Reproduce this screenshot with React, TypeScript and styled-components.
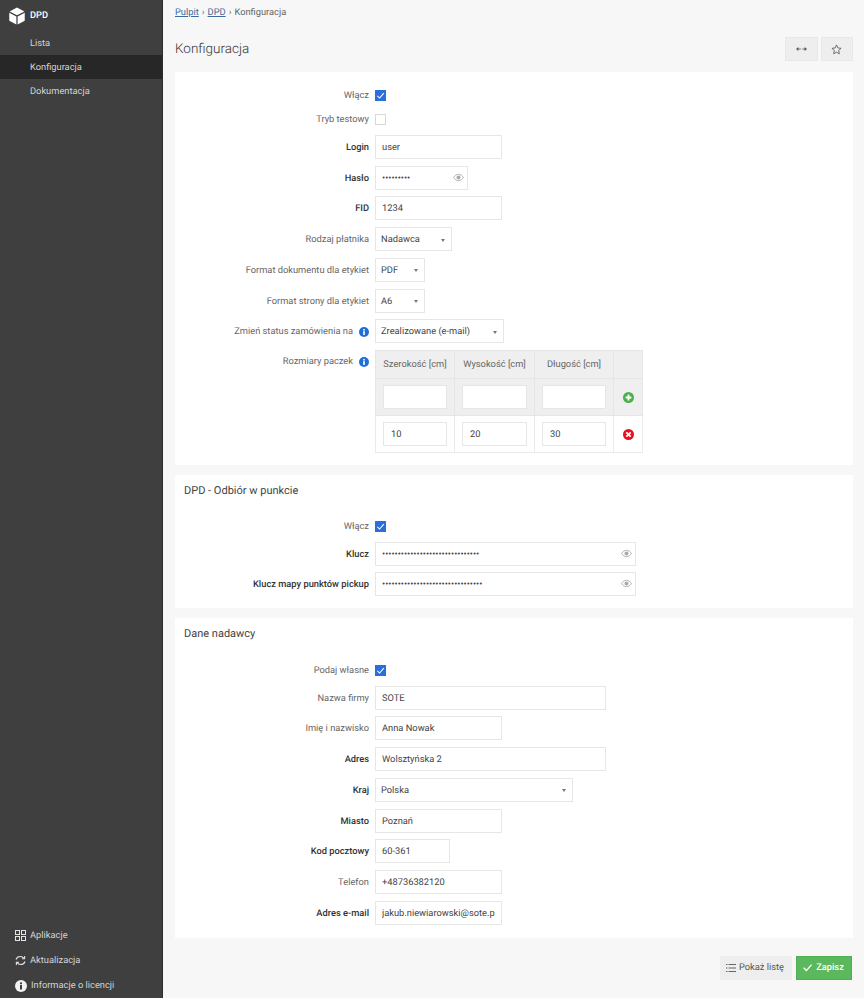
import React from 'react';
import styled, { createGlobalStyle } from 'styled-components';

const Global = createGlobalStyle`
  html, body { margin: 0; padding: 0; background: #f7f7f7; }
  body { font-family: Roboto, "Liberation Sans", sans-serif; font-size: 9.3px; color: #555; text-rendering: geometricPrecision; }
  input, button { text-rendering: geometricPrecision; }
  * { box-sizing: border-box; }
`;

const Shell = styled.div`display: flex; min-height: 998px;`;
const Sidebar = styled.aside`
  width: 163px; flex: none; background: #3f3f3f; border-right: 1px solid #2c2c2c;
  display: flex; flex-direction: column; color: #e2e2e2;
`;
const Brand = styled.div`
  height: 31px; padding: 0 0 0 9px; display: flex; align-items: center; gap: 5px;
  color: #fff; font-weight: 500;
`;
const NavList = styled.nav`display: flex; flex-direction: column;`;
const NavItem = styled.a<{ $active?: boolean }>`
  height: 24px; padding: 1px 0 0 30px; display: flex; align-items: center;
  background: ${p => (p.$active ? '#272727' : 'transparent')}; color: #d4d4d4;
`;
const SideFooter = styled.div`margin-top: auto; display: flex; flex-direction: column;`;
const FootItem = styled.a`
  height: 25.3px; padding: 1px 0 0 15px; display: flex; align-items: center; gap: 4px; color: #d4d4d4;
`;

const Main = styled.main`flex: 1; min-width: 0; padding: 0 11px 0 12px;`;
const Crumbs = styled.div`height: 24px; padding-top: 1px; display: flex; align-items: center; gap: 3px; color: #666;`;
const CrumbLink = styled.a`color: #3c6a9e; text-decoration: underline;`;
const TitleBar = styled.div`
  height: 48px; display: flex; align-items: center; justify-content: space-between; padding-top: 2px;
`;
const Title = styled.h1`margin: 0; font-size: 13.5px; font-weight: 300; color: #333;`;
const TitleActions = styled.div`display: flex; gap: 3px;`;
const IconButton = styled.button`
  width: 32.5px; height: 24px; padding: 0; background: #eee; border: 1px solid #e8e8e8;
  display: flex; align-items: center; justify-content: center; color: #555;
`;

const Card = styled.section<{ $bottom?: number }>`
  background: #fff; margin-bottom: 10px; padding-bottom: ${p => p.$bottom ?? 12}px;
`;
const CardHead = styled.h2`
  margin: 0; height: 29px; padding: 1px 0 0 9px; display: flex; align-items: center;
  font-size: 11px; font-weight: 400; color: #444;
`;
const Form = styled.div<{ $top: number }>`
  padding-top: ${p => p.$top}px; display: flex; flex-direction: column; gap: 6.75px;
`;
const Row = styled.div<{ $check?: boolean }>`
  display: grid; grid-template-columns: 194px 1fr; column-gap: 6px;
  align-items: ${p => (p.$check ? 'center' : 'start')};
  min-height: ${p => (p.$check ? '17.33px' : '24px')};
`;
const Label = styled.label<{ $bold?: boolean; $top?: boolean }>`
  display: flex; justify-content: flex-end; align-items: center; gap: 6px; padding-top: 1px;
  height: ${p => (p.$top ? '22px' : 'auto')}; min-height: ${p => (p.$top ? '22px' : '24px')};
  font-weight: ${p => (p.$bold ? 500 : 400)}; color: ${p => (p.$bold ? '#333' : '#666')};
  white-space: nowrap;
`;
const CheckLabel = styled(Label)`min-height: 0;`;
const Box = styled.span<{ $on?: boolean }>`
  width: 11px; height: 11px; display: flex; align-items: center; justify-content: center;
  background: ${p => (p.$on ? '#2a6fdb' : '#fff')};
  border: 1px solid ${p => (p.$on ? '#2a6fdb' : '#d8d8d8')};
`;
const FieldWrap = styled.div<{ $w: number }>`position: relative; width: ${p => p.$w}px; height: 24px;`;
const TextInput = styled.input`
  display: block; width: 100%; height: 100%; border: 1px solid #e6e6e6; background: #fff; outline: 0;
  padding: 1px 6px 0; font: 400 9.3px Roboto, sans-serif; color: #444;
`;
const EyeSlot = styled.span`position: absolute; right: 4px; top: 7px; color: #aaa; display: flex;`;
const SelectBox = styled.div<{ $w: number }>`
  width: ${p => p.$w}px; height: 24px; border: 1px solid #e6e6e6; background: #fff;
  display: flex; align-items: center; justify-content: space-between; padding: 1px 6px 0 5px; color: #444;
`;
const Caret = styled.span`
  width: 0; height: 0; border-left: 2px solid transparent; border-right: 2px solid transparent;
  border-top: 3px solid #777; margin-top: 1px;
`;
const Table = styled.table`
  border-collapse: collapse; width: 267px; table-layout: fixed; color: #555;
  th, td { border: 1px solid #eaeaea; padding: 0; text-align: center; }
`;
const Head = styled.tr`
  background: #efefef; height: 28px;
  th { font-weight: 400; color: #666; border-color: #e6e6e6; }
`;
const BodyRow = styled.tr<{ $shade?: boolean }>`
  height: 37px; background: ${p => (p.$shade ? '#efefef' : '#fff')};
  td { padding: 0 7px; }
  td:last-child { padding: 0; }
  ${p => p.$shade && 'td { border-color: #e6e6e6; }'}
`;
const CellInput = styled(TextInput)`height: 24px; padding: 1px 7px 0;`;
const ActionIcon = styled.span`display: flex; justify-content: center;`;
const Foot = styled.div`display: flex; justify-content: flex-end; gap: 4px; padding: 8px 1px 0 0;`;
const ListBtn = styled.button`
  width: 72px; height: 24px; background: #eee; border: 0; display: flex; align-items: center; justify-content: center;
  gap: 3px; font: 400 9.3px Roboto, sans-serif; color: #555; padding: 0 2px 0 0;
`;
const SaveBtn = styled.button`
  width: 56px; height: 24px; background: #5cb85c; border: 1px solid #52ae52; display: flex; align-items: center;
  justify-content: center; gap: 3px; font: 500 9.3px Roboto, sans-serif; color: #fff; padding: 0 2px 0 0;
`;

const Logo = () => (
  <svg width="16" height="18" viewBox="0 0 15 17">
    <path d="M7.5 .5 14.5 4.2 7.5 7.8 .5 4.2Z" fill="#fff" />
    <path d="M.2 5.4 6.9 8.9V16.6L.2 13Z" fill="#fff" />
    <path d="M14.8 5.4 8.1 8.9V16.6L14.8 13Z" fill="#fff" />
  </svg>
);
const Check = ({ c = '#fff', s = 9 }: { c?: string; s?: number }) => (
  <svg width={s} height={s} viewBox="0 0 10 10"><path d="M1.5 5.3 4 7.8 8.7 2.4" fill="none" stroke={c} strokeWidth="1.2" /></svg>
);
const Eye = () => (
  <svg width="11" height="9" viewBox="0 0 12 10">
    <path d="M.5 5C2 2.6 3.8 1.5 6 1.5S10 2.6 11.5 5C10 7.4 8.2 8.5 6 8.5S2 7.4.5 5Z" fill="none" stroke="#aaa" />
    <circle cx="6" cy="5" r="2.2" fill="#aaa" />
  </svg>
);
const Info = ({ bg = '#1f6fd6', fg = '#fff', s = 10 }: { bg?: string; fg?: string; s?: number }) => (
  <svg width={s} height={s} viewBox="0 0 12 12">
    <circle cx="6" cy="6" r="6" fill={bg} />
    <rect x="5" y="5" width="2" height="4.5" fill={fg} />
    <rect x="5" y="2.4" width="2" height="1.8" fill={fg} />
  </svg>
);
const Plus = () => (
  <svg width="11" height="11" viewBox="0 0 12 12">
    <circle cx="6" cy="6" r="6" fill="#4cae4c" />
    <path d="M6 2.8V9.2M2.8 6H9.2" stroke="#fff" strokeWidth="2" />
  </svg>
);
const Cross = () => (
  <svg width="11" height="11" viewBox="0 0 12 12">
    <circle cx="6" cy="6" r="6" fill="#e8101c" />
    <path d="M3.6 3.6 8.4 8.4M8.4 3.6 3.6 8.4" stroke="#fff" strokeWidth="2" />
  </svg>
);
const Grid = () => (
  <svg width="11" height="11" viewBox="0 0 11 11" fill="none" stroke="#e2e2e2">
    <rect x=".5" y=".5" width="4" height="4" /><rect x="6.5" y=".5" width="4" height="4" />
    <rect x=".5" y="6.5" width="4" height="4" /><rect x="6.5" y="6.5" width="4" height="4" />
  </svg>
);
const Sync = () => (
  <svg width="11" height="11" viewBox="0 0 11 11" fill="none" stroke="#e2e2e2" strokeWidth="1.1">
    <path d="M1 4.5C1.6 2.6 3.3 1.5 5.3 1.5c1.5 0 2.8.7 3.6 1.9" />
    <path d="M10 6.5C9.4 8.4 7.7 9.5 5.7 9.5c-1.5 0-2.8-.7-3.6-1.9" />
    <path d="M9.6 1V3.8H7M1.4 10V7.2H4" />
  </svg>
);
const Arrows = () => (
  <svg width="11" height="6" viewBox="0 0 11 6" fill="#555">
    <rect x="2" y="2.6" width="2.8" height=".8" /><rect x="6.2" y="2.6" width="2.8" height=".8" />
    <path d="M0 3 2.4 1V5ZM11 3 8.6 1V5Z" />
  </svg>
);
const Star = () => (
  <svg width="11" height="11" viewBox="0 0 12 12">
    <path d="M6 1 7.5 4.3 11 4.7 8.4 7.1 9.1 10.7 6 8.9 2.9 10.7 3.6 7.1 1 4.7 4.5 4.3Z" fill="none" stroke="#555" strokeWidth=".9" />
  </svg>
);
const ListIcon = () => (
  <svg width="10" height="8" viewBox="0 0 10 8" fill="#666">
    <rect y="0" width="1.5" height="1" /><rect x="2.5" y="0" width="7.5" height="1" />
    <rect y="3.5" width="1.5" height="1" /><rect x="2.5" y="3.5" width="7.5" height="1" />
    <rect y="7" width="1.5" height="1" /><rect x="2.5" y="7" width="7.5" height="1" />
  </svg>
);

const CheckRow = ({ label, on }: { label: string; on?: boolean }) => (
  <Row $check>
    <CheckLabel>{label}</CheckLabel>
    <Box $on={on}>{on && <Check />}</Box>
  </Row>
);
const InputRow = ({ label, value, w, bold }: { label: string; value: string; w: number; bold?: boolean }) => (
  <Row>
    <Label $bold={bold}>{label}</Label>
    <FieldWrap $w={w}><TextInput readOnly defaultValue={value} /></FieldWrap>
  </Row>
);
const PassRow = ({ label, value, w, bold }: { label: string; value: string; w: number; bold?: boolean }) => (
  <Row>
    <Label $bold={bold}>{label}</Label>
    <FieldWrap $w={w}>
      <TextInput readOnly type="password" defaultValue={value} />
      <EyeSlot><Eye /></EyeSlot>
    </FieldWrap>
  </Row>
);
const SelectRow = ({ label, value, w, bold, info }: { label: string; value: string; w: number; bold?: boolean; info?: boolean }) => (
  <Row>
    <Label $bold={bold}>{label}{info && <Info />}</Label>
    <SelectBox $w={w}>{value}<Caret /></SelectBox>
  </Row>
);

export default function App() {
  return (
    <Shell>
      <Global />
      <Sidebar>
        <Brand><Logo />DPD</Brand>
        <NavList>
          <NavItem>Lista</NavItem>
          <NavItem $active>Konfiguracja</NavItem>
          <NavItem>Dokumentacja</NavItem>
        </NavList>
        <SideFooter>
          <FootItem><Grid />Aplikacje</FootItem>
          <FootItem><Sync />Aktualizacja</FootItem>
          <FootItem><Info bg="#f2f2f2" fg="#3f3f3f" s={12} />Informacje o licencji</FootItem>
        </SideFooter>
      </Sidebar>
      <Main>
        <Crumbs><CrumbLink>Pulpit</CrumbLink>›<CrumbLink>DPD</CrumbLink>›<span>Konfiguracja</span></Crumbs>
        <TitleBar>
          <Title>Konfiguracja</Title>
          <TitleActions>
            <IconButton><Arrows /></IconButton>
            <IconButton><Star /></IconButton>
          </TitleActions>
        </TitleBar>
        <Card>
          <Form $top={14.6}>
            <CheckRow label="Włącz" on />
            <CheckRow label="Tryb testowy" />
            <InputRow label="Login" value="user" w={127} bold />
            <PassRow label="Hasło" value="123456789" w={93} bold />
            <InputRow label="FID" value="1234" w={127} bold />
            <SelectRow label="Rodzaj płatnika" value="Nadawca" w={77} />
            <SelectRow label="Format dokumentu dla etykiet" value="PDF" w={50} />
            <SelectRow label="Format strony dla etykiet" value="A6" w={50} />
            <SelectRow label="Zmień status zamówienia na" value="Zrealizowane (e-mail)" w={129} info />
            <Row>
              <Label $top>Rozmiary paczek<Info /></Label>
              <Table>
                <colgroup><col width="79" /><col width="80" /><col width="79" /><col width="29" /></colgroup>
                <thead><Head><th>Szerokość [cm]</th><th>Wysokość [cm]</th><th>Długość [cm]</th><th /></Head></thead>
                <tbody>
                  <BodyRow $shade>
                    <td><CellInput readOnly /></td><td><CellInput readOnly /></td><td><CellInput readOnly /></td>
                    <td><ActionIcon><Plus /></ActionIcon></td>
                  </BodyRow>
                  <BodyRow>
                    <td><CellInput readOnly defaultValue="10" /></td><td><CellInput readOnly defaultValue="20" /></td><td><CellInput readOnly defaultValue="30" /></td>
                    <td><ActionIcon><Cross /></ActionIcon></td>
                  </BodyRow>
                </tbody>
              </Table>
            </Row>
          </Form>
        </Card>
        <Card>
          <CardHead>DPD - Odbiór w punkcie</CardHead>
          <Form $top={13.6}>
            <CheckRow label="Włącz" on />
            <PassRow label="Klucz" value="abcdefghijklmnopqrstuvwxyz01234" w={261} bold />
            <PassRow label="Klucz mapy punktów pickup" value="abcdefghijklmnopqrstuvwxyz012345" w={261} bold />
          </Form>
        </Card>
        <Card $bottom={13}>
          <CardHead>Dane nadawcy</CardHead>
          <Form $top={14}>
            <CheckRow label="Podaj własne" on />
            <InputRow label="Nazwa firmy" value="SOTE" w={231} />
            <InputRow label="Imię i nazwisko" value="Anna Nowak" w={127} />
            <InputRow label="Adres" value="Wolsztyńska 2" w={231} bold />
            <SelectRow label="Kraj" value="Polska" w={198} bold />
            <InputRow label="Miasto" value="Poznań" w={127} bold />
            <InputRow label="Kod pocztowy" value="60-361" w={75} bold />
            <InputRow label="Telefon" value="+48736382120" w={127} />
            <InputRow label="Adres e-mail" value="jakub.niewiarowski@sote.pl" w={127} bold />
          </Form>
        </Card>
        <Foot>
          <ListBtn><ListIcon />Pokaż listę</ListBtn>
          <SaveBtn><Check s={11} />Zapisz</SaveBtn>
        </Foot>
      </Main>
    </Shell>
  );
}
